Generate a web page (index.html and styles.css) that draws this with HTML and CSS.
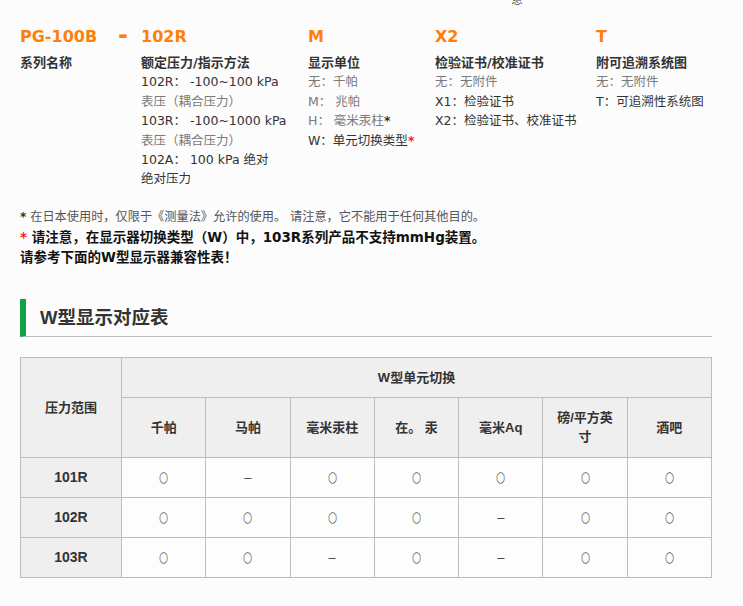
FILE: index.html
```html
<!DOCTYPE html>
<html lang="zh-CN">
<head>
<meta charset="utf-8">
<title>PG-100B 型号说明</title>
<link rel="stylesheet" href="styles.css">
</head>
<body>
<div class="page">
  <div class="topfrag"><div class="topfrag-inner">意</div></div>

  <div class="spec">
    <div class="code">PG-100B</div>
    <div class="code dash">-</div>
    <div class="code">102R</div>
    <div class="code">M</div>
    <div class="code">X2</div>
    <div class="code">T</div>

    <div class="col">
      <div class="label">系列名称</div>
    </div>
    <div class="col"></div>
    <div class="col">
      <div class="label">额定压力/指示方法</div>
      <div class="item">102R： -100~100 kPa</div>
      <div class="item muted">表压（耦合压力）</div>
      <div class="item">103R： -100~1000 kPa</div>
      <div class="item muted">表压（耦合压力）</div>
      <div class="item">102A： 100 kPa 绝对</div>
      <div class="item">绝对压力</div>
    </div>
    <div class="col">
      <div class="label">显示单位</div>
      <div class="item muted">无：千帕</div>
      <div class="item muted">M： 兆帕</div>
      <div class="item muted">H： 毫米汞柱<span class="ast">*</span></div>
      <div class="item">W：单元切换类型<span class="ast red">*</span></div>
    </div>
    <div class="col">
      <div class="label">检验证书/校准证书</div>
      <div class="item muted">无：无附件</div>
      <div class="item">X1：检验证书</div>
      <div class="item">X2：检验证书、校准证书</div>
    </div>
    <div class="col">
      <div class="label">附可追溯系统图</div>
      <div class="item muted">无：无附件</div>
      <div class="item">T：可追溯性系统图</div>
    </div>
  </div>

  <div class="notes">
    <p class="note"><span class="ast">*</span> 在日本使用时，仅限于《测量法》允许的使用。 请注意，它不能用于任何其他目的。</p>
    <p class="note strong"><span class="ast red">*</span> 请注意，在显示器切换类型（W）中，103R系列产品不支持mmHg装置。</p>
    <p class="note strong">请参考下面的W型显示器兼容性表！</p>
  </div>

  <h2 class="section-title">W型显示对应表</h2>

  <table class="compat">
    <colgroup>
      <col class="c-first">
      <col span="7">
    </colgroup>
    <thead>
      <tr class="r-top">
        <th rowspan="2">压力范围</th>
        <th colspan="7">W型单元切换</th>
      </tr>
      <tr class="r-units">
        <th>千帕</th>
        <th>马帕</th>
        <th>毫米汞柱</th>
        <th>在。 汞</th>
        <th>毫米Aq</th>
        <th>磅/平方英寸</th>
        <th>酒吧</th>
      </tr>
    </thead>
    <tbody>
      <tr>
        <th>101R</th>
        <td><span class="ok">○</span></td>
        <td><span class="no">–</span></td>
        <td><span class="ok">○</span></td>
        <td><span class="ok">○</span></td>
        <td><span class="ok">○</span></td>
        <td><span class="ok">○</span></td>
        <td><span class="ok">○</span></td>
      </tr>
      <tr>
        <th>102R</th>
        <td><span class="ok">○</span></td>
        <td><span class="ok">○</span></td>
        <td><span class="ok">○</span></td>
        <td><span class="ok">○</span></td>
        <td><span class="no">–</span></td>
        <td><span class="ok">○</span></td>
        <td><span class="ok">○</span></td>
      </tr>
      <tr>
        <th>103R</th>
        <td><span class="ok">○</span></td>
        <td><span class="ok">○</span></td>
        <td><span class="no">–</span></td>
        <td><span class="ok">○</span></td>
        <td><span class="no">–</span></td>
        <td><span class="ok">○</span></td>
        <td><span class="ok">○</span></td>
      </tr>
    </tbody>
  </table>
</div>
</body>
</html>
```
FILE: styles.css
```css
html, body {
  margin: 0;
  padding: 0;
  background: #fcfcfc;
}

body {
  font-family: "DejaVu Sans", "Noto Sans CJK SC", sans-serif;
  color: #333;
  font-size: 13px;
}

.page {
  padding: 0 31px 0 20px;
}

.topfrag {
  height: 6px;
  overflow: hidden;
}

.topfrag-inner {
  font-family: "Noto Sans CJK SC", sans-serif;
  font-size: 12px;
  line-height: 12px;
  margin-top: -7px;
  padding-left: 491px;
  color: #555;
}

.spec {
  display: grid;
  grid-template-columns: 98px 23px 167px 127px 161px 1fr;
  margin-top: 21px;
}

.code {
  color: #ff7f0a;
  font-weight: bold;
  font-size: 16px;
  line-height: 20px;
  margin-bottom: 6px;
}

.dash {
  font-size: 24px;
  line-height: 16px;
  letter-spacing: 0;
}

.col {
  font-size: 13px;
}

.label {
  font-weight: bold;
  line-height: 19.4px;
  color: #333;
}

.item {
  line-height: 19.4px;
  color: #333;
  white-space: nowrap;
  font-size: 12.5px;
}

.item.muted {
  color: #7a7a7a;
}

.ast {
  font-weight: bold;
  color: #333;
}

.ast.red {
  color: #ff1a1a;
}

.notes {
  margin-top: 18px;
}

.note {
  margin: 0;
  font-size: 12.2px;
  line-height: 20px;
  color: #555;
}

.note.strong {
  font-weight: bold;
  font-size: 13.5px;
  color: #111;
}

.section-title {
  margin: 32px 0 20px 0;
  height: 37px;
  line-height: 37px;
  border-left: 6px solid #0fa24a;
  border-bottom: 1px solid #bdbdbd;
  padding-left: 14px;
  font-family: "Liberation Sans", "Noto Sans CJK SC", sans-serif;
  font-size: 18.5px;
  font-weight: bold;
  color: #333;
}

.compat {
  width: 692px;
  border-collapse: collapse;
  table-layout: fixed;
  font-family: "Liberation Sans", "Noto Sans CJK SC", sans-serif;
  font-size: 13px;
  color: #333;
}

.c-first {
  width: 101px;
}

.compat th,
.compat td {
  border: 1px solid #bdbdbd;
  text-align: center;
  vertical-align: middle;
  padding: 0 10px;
  line-height: 19px;
}

.compat thead th {
  background: #efefef;
  font-weight: bold;
}

.compat tbody th {
  background: #efefef;
  font-weight: bold;
  font-size: 14px;
}

.compat td {
  background: #fdfdfd;
}

.r-top th {
  height: 39px;
}

.r-units th {
  height: 59px;
}

.compat tbody th,
.compat tbody td {
  height: 39px;
}

.ok {
  display: inline-block;
  font-family: "DejaVu Sans", sans-serif;
  font-size: 15px;
  color: #555;
  transform: scaleX(0.7);
}

.no {
  color: #444;
  font-size: 13px;
}
```
